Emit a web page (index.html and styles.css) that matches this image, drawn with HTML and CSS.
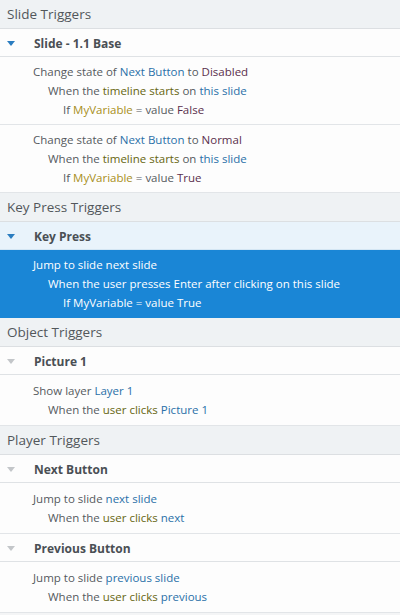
FILE: index.html
```html
<!DOCTYPE html>
<html>
<head>
<meta charset="utf-8">
<link rel="stylesheet" href="styles.css">
</head>
<body>
<div class="panel">
  <div class="section">Slide Triggers</div>
  <div class="group"><span class="tri tri-blue"></span><span class="gname">Slide - 1.1 Base</span></div>
  <div class="rows">
    <div class="l1">Change state of <span class="obj">Next Button</span> to <span class="val">Disabled</span></div>
    <div class="l2">When the <span class="evt">timeline starts</span> on <span class="obj">this slide</span></div>
    <div class="l3">If <span class="var">MyVariable</span> = value <span class="val">False</span></div>
  </div>
  <div class="rows">
    <div class="l1">Change state of <span class="obj">Next Button</span> to <span class="val">Normal</span></div>
    <div class="l2">When the <span class="evt">timeline starts</span> on <span class="obj">this slide</span></div>
    <div class="l3">If <span class="var">MyVariable</span> = value <span class="val">True</span></div>
  </div>

  <div class="section">Key Press Triggers</div>
  <div class="group group-active"><span class="tri tri-blue"></span><span class="gname">Key Press</span></div>
  <div class="rows selected">
    <div class="l1">Jump to slide next slide</div>
    <div class="l2">When the user presses Enter after clicking on this slide</div>
    <div class="l3">If MyVariable = value True</div>
  </div>

  <div class="section">Object Triggers</div>
  <div class="group"><span class="tri"></span><span class="gname">Picture 1</span></div>
  <div class="rows two">
    <div class="l1">Show layer <span class="obj">Layer 1</span></div>
    <div class="l2">When the <span class="evt">user clicks</span> <span class="obj">Picture 1</span></div>
  </div>

  <div class="section">Player Triggers</div>
  <div class="group"><span class="tri"></span><span class="gname">Next Button</span></div>
  <div class="rows two">
    <div class="l1">Jump to slide <span class="obj">next slide</span></div>
    <div class="l2">When the <span class="evt">user clicks</span> <span class="obj">next</span></div>
  </div>
  <div class="group"><span class="tri"></span><span class="gname">Previous Button</span></div>
  <div class="rows two">
    <div class="l1">Jump to slide <span class="obj">previous slide</span></div>
    <div class="l2">When the <span class="evt">user clicks</span> <span class="obj">previous</span></div>
  </div>
</div>
</body>
</html>
```

FILE: styles.css
```css
html, body {
  margin: 0;
  padding: 0;
  background: #f4f5f6;
}
body {
  font-family: "Open Sans", "Noto Sans", "Liberation Sans", sans-serif;
  font-size: 11.5px;
  color: #555a5e;
}
.panel {
  width: 400px;
  background: #fdfdfd;
}
.section {
  height: 28px;
  line-height: 29px;
  padding-left: 7px;
  font-size: 13.5px;
  color: #52575b;
  background: #eff2f4;
  border-bottom: 1px solid #dcdfe2;
}
.group {
  height: 27px;
  display: flex;
  align-items: center;
  background: #fdfdfd;
  border-bottom: 1px solid #dfe2e5;
}
.group-active {
  background: #e9f3fb;
  border-bottom-color: #d4e6f4;
}
.tri {
  width: 0;
  height: 0;
  margin-left: 7px;
  margin-right: 19px;
  margin-top: 1px;
  border-left: 4px solid transparent;
  border-right: 4px solid transparent;
  border-top: 5px solid #c3c6c9;
}
.tri-blue {
  border-top-color: #2b7dc0;
}
.gname {
  font-weight: 700;
  font-size: 12px;
  color: #4a4f54;
  padding-top: 1px;
}
.rows {
  padding: 5px 0;
  line-height: 19px;
  border-bottom: 1px solid #e2e5e8;
  background: #fdfdfd;
}
.rows.two {
  padding: 6px 0;
}
.l1 { padding-left: 33px; }
.l2 { padding-left: 48px; }
.l3 { padding-left: 63px; }
.obj { color: #2a70a8; }
.evt { color: #66650f; }
.var { color: #a88f22; }
.val { color: #5a2f4c; }
.rows.selected {
  background: #1a86d6;
  color: #ffffff;
  border-bottom-color: #1a86d6;
}
```
